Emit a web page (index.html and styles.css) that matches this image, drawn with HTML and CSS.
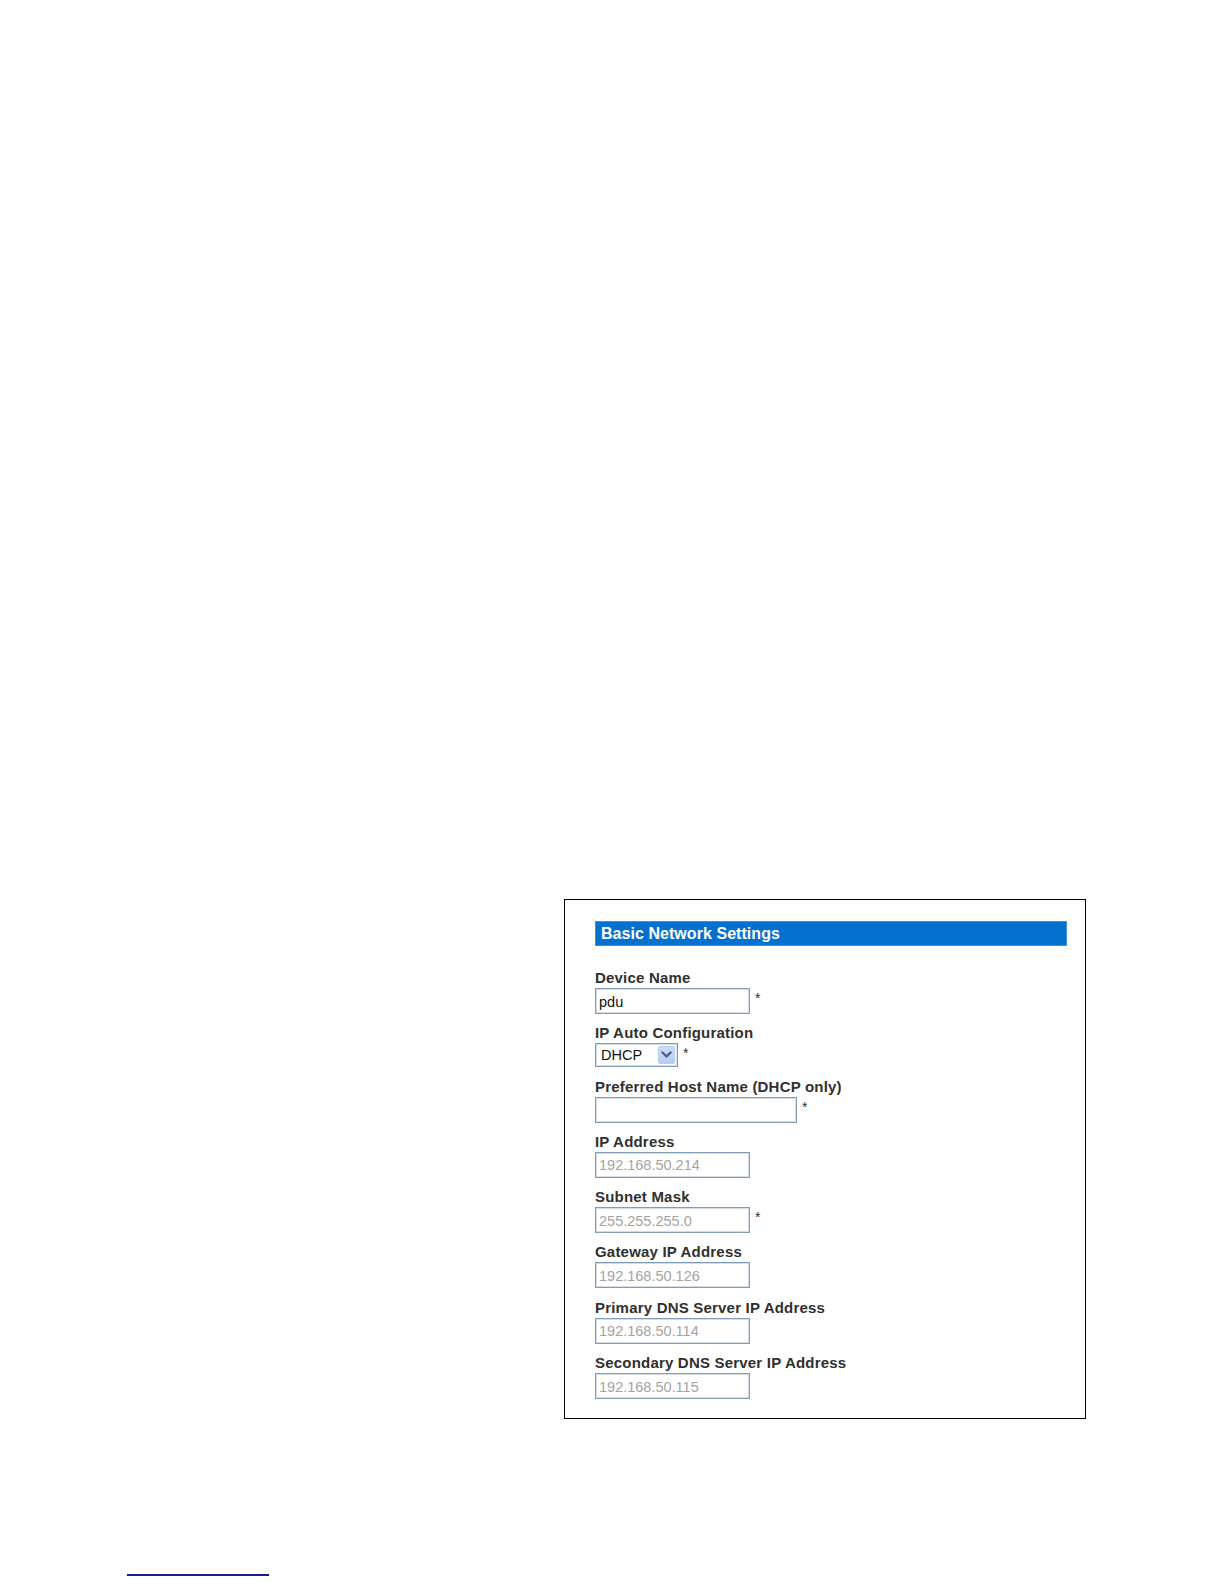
FILE: index.html
```html
<!DOCTYPE html>
<html lang="en">
<head>
<meta charset="utf-8">
<title>Basic Network Settings</title>
<link rel="stylesheet" href="styles.css">
</head>
<body>
<div class="page">
  <section class="panel">
    <div class="panel-title">Basic Network Settings</div>
    <div class="fields">
      <div class="field">
        <div class="field-label">Device Name</div>
        <div class="field-row">
          <input class="text-input" type="text" value="pdu" readonly>
          <span class="req">*</span>
        </div>
      </div>
      <div class="field field-select">
        <div class="field-label">IP Auto Configuration</div>
        <div class="field-row">
          <div class="select-box">
            <span class="select-value">DHCP</span>
            <span class="select-button">
              <svg width="11" height="8" viewBox="0 0 11 8"><path d="M1.5 1.5 L5.5 5.5 L9.5 1.5" fill="none" stroke="#4a5f8c" stroke-width="2.4" stroke-linecap="round" stroke-linejoin="round"/></svg>
            </span>
          </div>
          <span class="req">*</span>
        </div>
      </div>
      <div class="field">
        <div class="field-label">Preferred Host Name (DHCP only)</div>
        <div class="field-row">
          <input class="text-input text-input-wide" type="text" value="" readonly>
          <span class="req">*</span>
        </div>
      </div>
      <div class="field">
        <div class="field-label">IP Address</div>
        <div class="field-row">
          <input class="text-input is-disabled" type="text" value="192.168.50.214" readonly>
        </div>
      </div>
      <div class="field">
        <div class="field-label">Subnet Mask</div>
        <div class="field-row">
          <input class="text-input is-disabled" type="text" value="255.255.255.0" readonly>
          <span class="req">*</span>
        </div>
      </div>
      <div class="field">
        <div class="field-label">Gateway IP Address</div>
        <div class="field-row">
          <input class="text-input is-disabled" type="text" value="192.168.50.126" readonly>
        </div>
      </div>
      <div class="field">
        <div class="field-label">Primary DNS Server IP Address</div>
        <div class="field-row">
          <input class="text-input is-disabled" type="text" value="192.168.50.114" readonly>
        </div>
      </div>
      <div class="field">
        <div class="field-label">Secondary DNS Server IP Address</div>
        <div class="field-row">
          <input class="text-input is-disabled" type="text" value="192.168.50.115" readonly>
        </div>
      </div>
    </div>
  </section>
  <div class="footnote-rule"></div>
</div>
</body>
</html>
```
FILE: styles.css
```css
html, body {
  margin: 0;
  padding: 0;
  background: #ffffff;
}

body {
  font-family: "Liberation Sans", Arial, sans-serif;
  color: #333333;
}

.page {
  padding-top: 899px;
  width: 1224px;
  height: 1584px;
  box-sizing: border-box;
}

.panel {
  margin-left: 564px;
  width: 522px;
  height: 520px;
  box-sizing: border-box;
  border: 1px solid #000000;
  padding: 21px 18px 0 30px;
}

.panel-title {
  height: 25px;
  box-sizing: border-box;
  background: #0571cf;
  border: 1px solid #3d92dd;
  color: #ffffff;
  font-weight: bold;
  font-size: 16px;
  line-height: 23px;
  padding-left: 5px;
  letter-spacing: 0.05px;
}

.fields {
  display: flex;
  flex-direction: column;
  padding-top: 23px;
}

.field {
  display: flex;
  flex-direction: column;
  margin-bottom: 10.3px;
}

.field-label {
  font-size: 15px;
  font-weight: bold;
  line-height: 17px;
  height: 17px;
  margin-bottom: 2px;
  color: #303030;
  white-space: nowrap;
  letter-spacing: 0.2px;
}

.field-row {
  display: flex;
  align-items: flex-start;
}

.text-input {
  box-sizing: border-box;
  width: 155px;
  height: 26px;
  margin: 0;
  border: 1px solid #7f9db9;
  box-shadow: inset 0 0 0 1px #d3dde8;
  padding: 1px 0 0 3px;
  font-family: "Liberation Sans", Arial, sans-serif;
  font-size: 14.5px;
  color: #111111;
  background: #ffffff;
  outline: none;
}

.text-input-wide {
  width: 202px;
}

.text-input.is-disabled {
  color: #a3a3a3;
}

.req {
  font-size: 14px;
  line-height: 14px;
  margin-left: 5px;
  margin-top: 3px;
  color: #303030;
}

.select-box {
  box-sizing: border-box;
  width: 83px;
  height: 24px;
  border: 1px solid #7f9db9;
  box-shadow: inset 0 0 0 1px #d3dde8;
  display: flex;
  align-items: center;
  justify-content: space-between;
  padding: 2px 2px 2px 5px;
  background: #ffffff;
}

.select-value {
  font-size: 14.5px;
  color: #111111;
  line-height: 18px;
}

.select-button {
  width: 17px;
  height: 18px;
  border-radius: 2px;
  background: linear-gradient(#cddcfb, #b7cbf3);
  border: 1px solid #b9cbef;
  box-sizing: border-box;
  display: flex;
  align-items: center;
  justify-content: center;
}

.footnote-rule {
  margin-top: 155px;
  margin-left: 127px;
  width: 142px;
  height: 1.5px;
  background: #1b1b86;
}
```
